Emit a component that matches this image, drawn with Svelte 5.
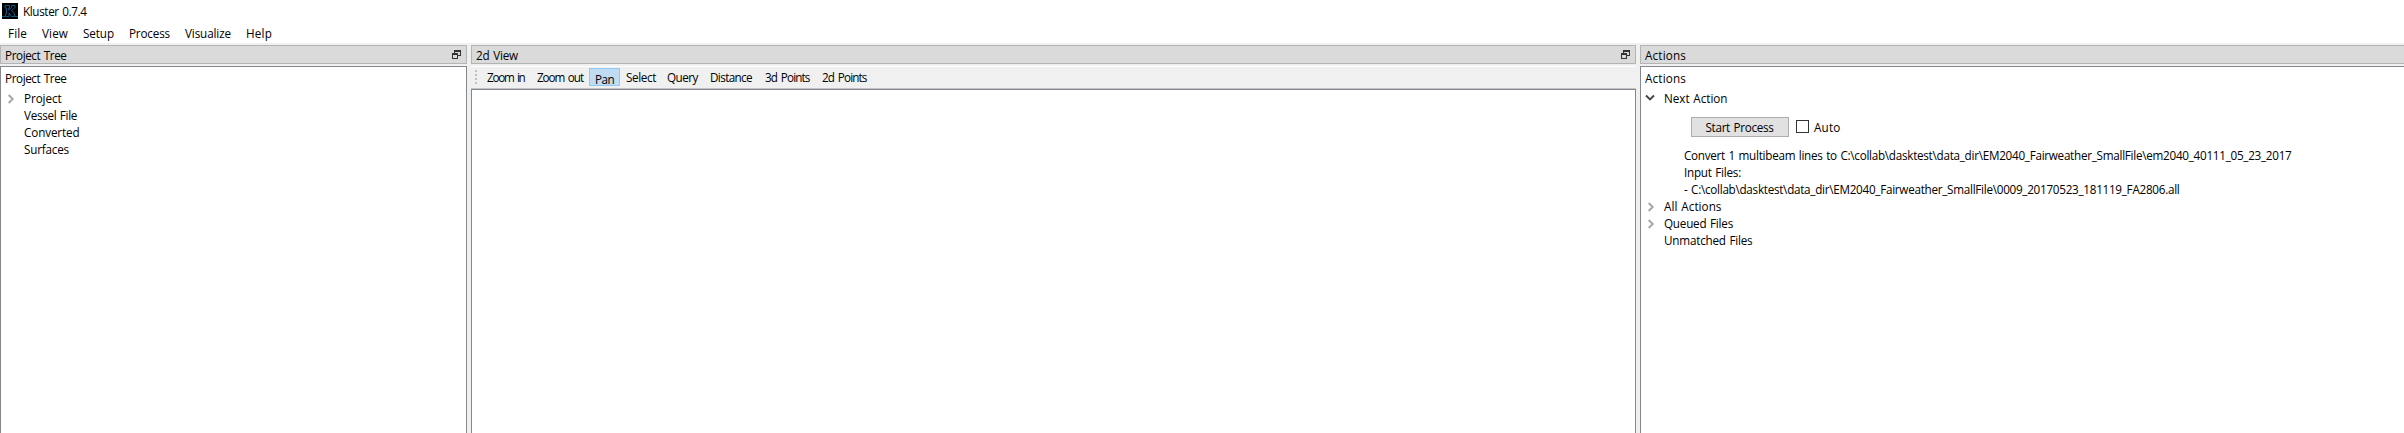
<script>
  const menus = [
    ['File', 19, 34], ['View', 26, 41], ['Setup', 31, 46],
    ['Process', 41, 56], ['Visualize', 46, 61], ['Help', 26, 41],
  ];
  const tools = [
    ['Zoom in', 37.5, 50], ['Zoom out', 46, 58], ['Pan', 19, 31], ['Select', 30, 41],
    ['Query', 31, 43], ['Distance', 42, 55], ['3d Points', 44.5, 57], ['2d Points', 44.5, 57],
  ];
  const tree = [['Project', 37.5, true], ['Vessel File', 53, false], ['Converted', 55.5, false], ['Surfaces', 45, false]];
  const details = [
    ['Convert 1 multibeam lines to C:\\collab\\dasktest\\data_dir\\EM2040_Fairweather_SmallFile\\em2040_40111_05_23_2017', 607.5],
    ['Input Files:', 57],
    ['- C:\\collab\\dasktest\\data_dir\\EM2040_Fairweather_SmallFile\\0009_20170523_181119_FA2806.all', 495.5],
  ];
  const groups = [['All Actions', 57.5, true], ['Queued Files', 69, true], ['Unmatched Files', 88.5, false]];

  // Spreads a label over the given advance width by adjusting its tracking.
  function fit(node, width) {
    const natural = node.getBoundingClientRect().width;
    node.style.letterSpacing = `${(width - natural) / node.textContent.length}px`;
  }
</script>

{#snippet label(text, width)}<span class="label" use:fit={width}>{text}</span>{/snippet}

{#snippet right()}
  <svg class="arrow" width="8" height="10" viewBox="0 0 8 10"><path d="M1.7 1 L5.7 5 L1.7 9" fill="none" stroke="#a6a6a6" stroke-width="1.9" /></svg>
{/snippet}

{#snippet restore()}
  <svg class="restore" width="9" height="9" viewBox="0 0 9 9" shape-rendering="crispEdges">
    <path d="M2 0H9V6H6V5H8V2H3V3H2Z M0 3H6V9H0Z M1 5V8H5V5Z" fill="#333" fill-rule="evenodd" />
  </svg>
{/snippet}

<div class="window">
  <header class="titlebar">
    <svg width="16" height="16" viewBox="0 0 16 16">
      <rect width="16" height="16" fill="#000" />
      <path d="M0 13.5H3.5V11H4.5V5H3V2.5H7.5V5H6.7V7L9.5 4.5V2.5H13V4.5L9.5 7.5L12.5 11V13.5H9.5L7 10V13.5H3.5M12.5 13.5H16" fill="none" stroke="#12608f" stroke-width=".9" />
    </svg>
    {@render label('Kluster 0.7.4', 63.5)}
  </header>
  <nav class="menubar">
    {#each menus as [text, w, box]}
      <div style:width="{box}px">{@render label(text, w)}</div>
    {/each}
  </nav>

  <main class="docks">
    <section class="dock">
      <div class="dock-title">{@render label('Project Tree', 61.5)}{@render restore()}</div>
      <div class="panel">
        <div class="heading">{@render label('Project Tree', 61.5)}</div>
        {#each tree as [text, w, expandable]}
          <div class="row"><i>{#if expandable}{@render right()}{/if}</i>{@render label(text, w)}</div>
        {/each}
      </div>
    </section>

    <section class="dock">
      <div class="dock-title">{@render label('2d View', 42)}{@render restore()}</div>
      <div class="toolbar">
        <div class="grip"><b></b><b></b><b></b><b></b></div>
        {#each tools as [text, w, box]}
          <div class="tool" class:active={text === 'Pan'} style:width="{box}px">{@render label(text, w)}</div>
        {/each}
      </div>
      <div class="canvas"></div>
    </section>

    <section class="dock last">
      <div class="dock-title">{@render label('Actions', 41)}</div>
      <div class="panel">
        <div class="heading">{@render label('Actions', 41)}</div>
        <div class="row">
          <i><svg class="down" width="10" height="8" viewBox="0 0 10 8"><path d="M1 1.5 L5 5.5 L9 1.5" fill="none" stroke="#444" stroke-width="1.9" /></svg></i>
          {@render label('Next Action', 63.5)}
        </div>
        <div class="controls">
          <button>{@render label('Start Process', 68)}</button>
          <span class="check"></span>
          {@render label('Auto', 26.5)}
        </div>
        {#each details as [text, w]}
          <div class="row detail">{@render label(text, w)}</div>
        {/each}
        {#each groups as [text, w, expandable]}
          <div class="row"><i>{#if expandable}{@render right()}{/if}</i>{@render label(text, w)}</div>
        {/each}
      </div>
    </section>
  </main>
</div>

<style>
  :global(body) { margin: 0; overflow: hidden; }
  .window {
    display: flex; flex-direction: column; width: 2404px; height: 433px; overflow: hidden;
    box-sizing: border-box; background: #fff; color: #000;
    font: 12px/17px "Open Sans", "Noto Sans", sans-serif;
  }
  .window * { box-sizing: border-box; }
  .label { display: inline-block; white-space: nowrap; flex: none; font-size: 11.7px; word-spacing: .8px; }
  svg { display: block; flex: none; }
  .titlebar { display: flex; height: 22px; padding: 3px 0 0 2px; gap: 5px; }
  .titlebar .label { height: 17px; }
  .menubar { display: flex; height: 21px; padding: 3px 0 0 8px; flex: none; }
  .menubar div { flex: none; }
  .docks {
    flex: 1; min-height: 0; display: grid; grid-template-columns: 467px 1165px 1fr; column-gap: 4px;
    padding-top: 2px; background: #f0f0f0;
  }
  .dock { display: flex; flex-direction: column; min-width: 0; min-height: 0; }
  .dock-title {
    display: flex; justify-content: space-between; height: 19px; flex: none;
    padding: 1px 5px 0 4px; border: 1px solid #b4b4b4; background: #dadada;
  }
  .restore { margin-top: 3px; }
  .panel { flex: 1; margin-top: 2px; border: 1px solid #828790; border-bottom: 0; background: #fff; }
  .last .panel, .last .dock-title { border-right: 0; }
  .heading { height: 21px; padding: 3px 0 0 4px; }
  .row { display: flex; height: 17px; }
  .heading + .row { margin-top: 2px; }
  .row i { width: 23px; flex: none; padding: 4px 0 0 6px; }
  .row .down { margin: 0 0 0 -2px; }
  .detail { padding-left: 43px; }
  .controls { display: flex; height: 40px; padding: 10px 0 0 50px; }
  button {
    width: 98px; height: 20px; padding: 0 1px 0 0; border: 1px solid #adadad; background: #e1e1e1;
    color: inherit; font: inherit; text-align: center; line-height: 18px;
  }
  .check { width: 13px; height: 13px; margin: 3px 5px 0 7px; border: 1px solid #333; background: #fff; }
  .controls > .label { line-height: 20px; }
  .toolbar { display: flex; height: 23px; flex: none; margin-top: 2px; border-top: 1px solid #fff; border-bottom: 1px solid #c4c4c4; background: #f0f0f0; }
  .grip { display: flex; flex-direction: column; gap: 2px; width: 10px; padding: 3px 0 0 4px; flex: none; }
  .grip b { width: 2px; height: 2px; background: #c0c0c0; }
  .tool { flex: none; height: 18px; margin-top: 1px; padding-left: 6px; line-height: 18px; }
  .tool .label { word-spacing: 1.6px; }
  .tool.active { background: #c0dcf3; border: 1px solid #90c8f6; padding: 1px 0 0 5px; }
  .canvas { flex: 1; border: 1px solid #828790; border-bottom: 0; background: #fff; }
</style>
